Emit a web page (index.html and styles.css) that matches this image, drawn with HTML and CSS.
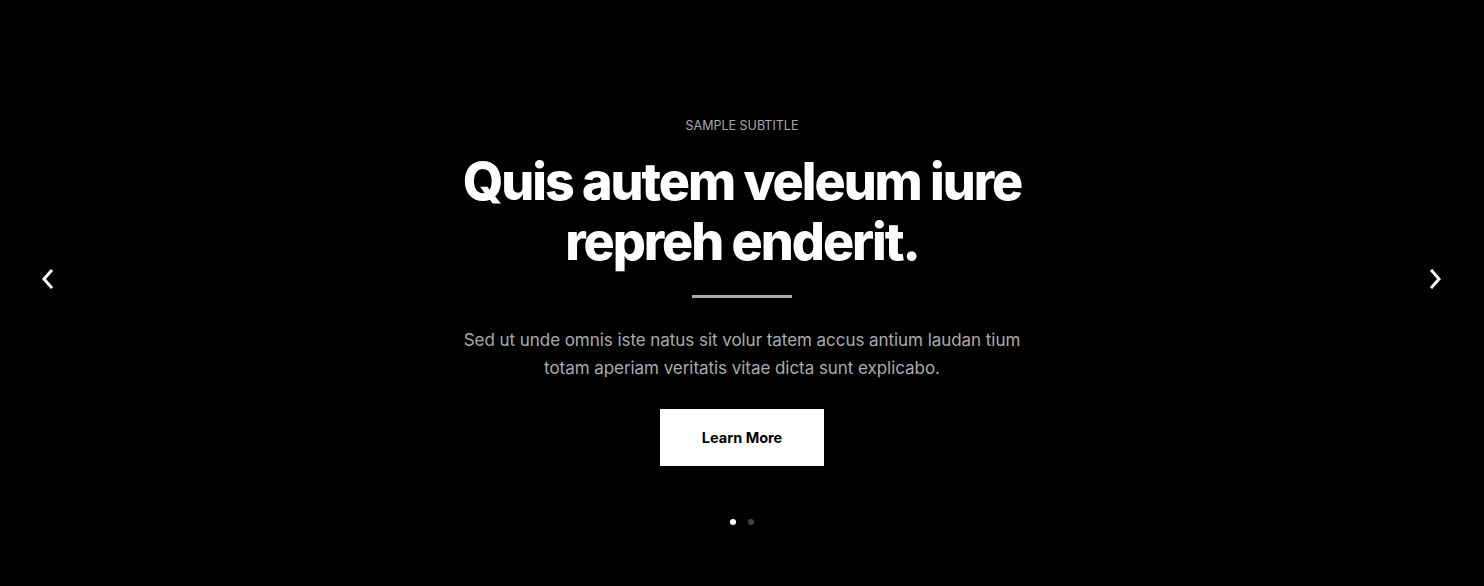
FILE: index.html
```html
<!DOCTYPE html>
<html>
<head>
<meta charset="utf-8">
<link rel="stylesheet" href="styles.css">
</head>
<body>
<section class="slider">
  <button class="nav nav-prev" aria-label="Previous">
    <svg width="16" height="22" viewBox="0 0 16 22"><path d="M11 3 L4 11 L11 19" fill="none" stroke="#fff" stroke-width="3" stroke-linecap="square" stroke-linejoin="miter"/></svg>
  </button>
  <div class="content">
    <div class="subtitle">SAMPLE SUBTITLE</div>
    <h1 class="title">Quis autem veleum iure repreh enderit.</h1>
    <div class="divider"></div>
    <p class="text">Sed ut unde omnis iste natus sit volur tatem accus antium laudan tium totam aperiam veritatis vitae dicta sunt explicabo.</p>
    <a class="btn" href="#">Learn More</a>
    <div class="dots"><span class="dot active"></span><span class="dot"></span></div>
  </div>
  <button class="nav nav-next" aria-label="Next">
    <svg width="16" height="22" viewBox="0 0 16 22"><path d="M5 3 L12 11 L5 19" fill="none" stroke="#fff" stroke-width="3" stroke-linecap="square" stroke-linejoin="miter"/></svg>
  </button>
</section>
</body>
</html>
```
FILE: styles.css
```css
* { box-sizing: border-box; }
html, body { margin: 0; padding: 0; background: #000; }
body { font-family: "Inter", "Roboto", sans-serif; }
.slider {
  height: 586px;
  background: #000;
  display: grid;
  grid-template-columns: 1fr 600px 1fr;
  align-items: center;
}
.nav {
  background: none;
  border: 0;
  padding: 0;
  width: 16px;
  height: 22px;
  display: flex;
  cursor: pointer;
  margin-top: -28px;
}
.nav-prev { justify-self: start; margin-left: 40px; }
.nav-next { justify-self: end; margin-right: 41px; }
.content {
  display: flex;
  flex-direction: column;
  align-items: center;
  text-align: center;
  align-self: start;
  padding-top: 117px;
}
.subtitle {
  font-size: 12.5px;
  line-height: 18px;
  color: #a8a8a8;
}
.title {
  margin: 17px 0 0;
  font-size: 52px;
  line-height: 60px;
  font-weight: 800;
  color: #fff;
  letter-spacing: -2.05px;
  width: 600px;
}
.divider {
  width: 100px;
  height: 3px;
  background: #aaa;
  margin-top: 23px;
}
.text {
  margin: 28px 0 0;
  font-size: 17px;
  line-height: 28px;
  color: #ababab;
  width: 590px;
  letter-spacing: -0.05px;
}
.btn {
  margin-top: 27px;
  width: 164px;
  height: 57px;
  background: #fff;
  color: #000;
  font-size: 14.5px;
  font-weight: 700;
  text-decoration: none;
  display: flex;
  align-items: center;
  justify-content: center;
}
.dots {
  display: flex;
  gap: 12px;
  margin-top: 53px;
}
.dot {
  width: 6px;
  height: 6px;
  border-radius: 50%;
  background: #444;
}
.dot.active { background: #fff; }
```
